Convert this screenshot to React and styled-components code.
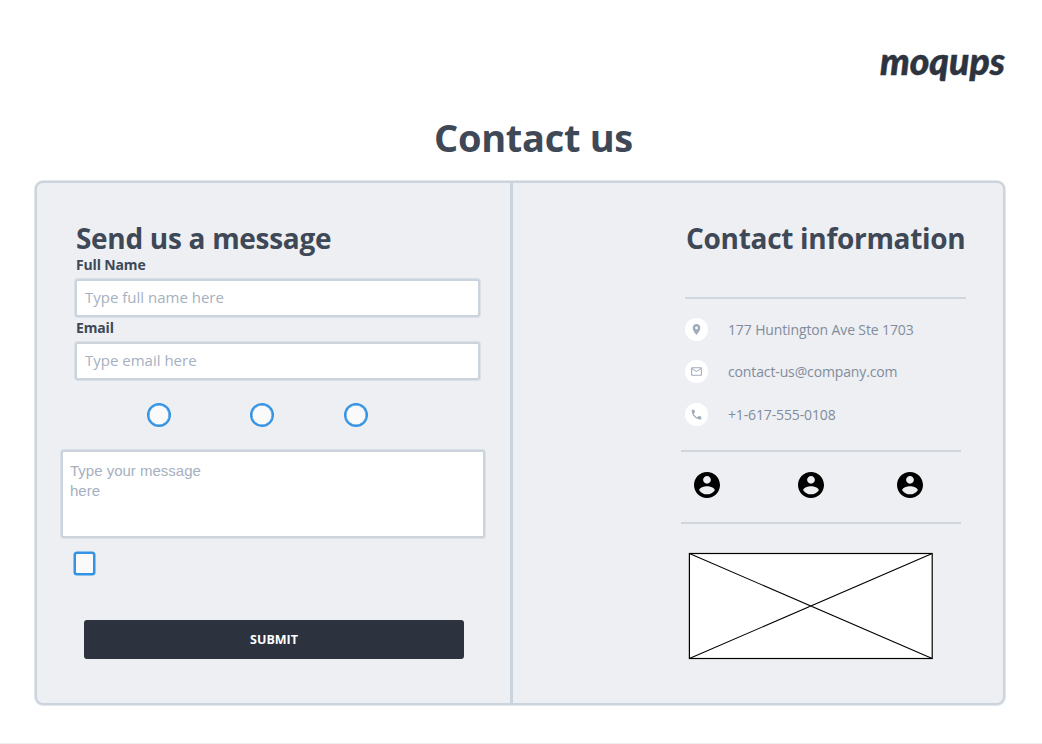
import React from "react";
import styled, { createGlobalStyle } from "styled-components";

const line = "#cbd3dd";
const halo = "rgba(203, 211, 221, 0.55)";
const sans = '"Open Sans", "Noto Sans", sans-serif';

const GlobalStyle = createGlobalStyle`
  *, *::before, *::after { box-sizing: border-box; }
  body { margin: 0; background: #fff; font-family: ${sans}; }
`;

const Page = styled.div`
  display: flex;
  flex-direction: column;
  width: 1042px;
  height: 744px;
  padding: 44px 36px 0 34px;
  border-bottom: 1px solid #efefef;
  overflow: hidden;
`;

const Header = styled.header`
  display: flex;
  justify-content: flex-end;
  height: 46px;
`;

const Wordmark = styled.svg`
  display: block;
  width: 130px;
  height: 46px;
  overflow: visible;
  font: italic 900 38px Lato, sans-serif;
  fill: #2d3440;
  stroke: #2d3440;
  stroke-width: 0.5px;
`;

const PageTitle = styled.h1`
  margin: 21px 0 0 400px;
  height: 69px;
  font-size: 38px;
  line-height: 52px;
  font-weight: 700;
  letter-spacing: -0.3px;
  color: #3e4856;
  white-space: nowrap;
`;

const Panel = styled.main`
  display: flex;
  width: 970px;
  height: 524px;
  margin: 1px;
  border: 2px solid ${line};
  border-radius: 8px;
  box-shadow: 0 0 0 1px ${halo};
  background: #edeff3;
`;

const MessageForm = styled.form`
  display: flex;
  flex-direction: column;
  align-items: flex-start;
  width: 476px;
  padding: 37px 0 0 23px;
  border-right: 3px solid ${line};
`;

const SectionTitle = styled.h2`
  margin: 0;
  height: 37px;
  font-size: 28px;
  line-height: 36px;
  font-weight: 700;
  letter-spacing: -0.3px;
  color: #3e4856;
  white-space: nowrap;
`;

const FormTitle = styled(SectionTitle)`
  margin-left: 16px;
`;

const Field = styled.label`
  display: flex;
  flex-direction: column;
  margin: 0 0 0 14px;
`;

const FieldName = styled.span`
  height: 21px;
  padding-left: 2px;
  font-size: 14px;
  line-height: 16px;
  font-weight: 700;
  letter-spacing: -0.15px;
  color: #3e4856;
`;

const TextInput = styled.input`
  width: 405px;
  height: 38px;
  margin: 1px 1px 3px;
  padding: 0 8px 2px;
  border: 2px solid ${line};
  border-radius: 3px;
  box-shadow: 0 0 0 1px ${halo};
  background: #fff;
  font: 15px ${sans};
  &::placeholder { color: #a5b0c0; opacity: 1; }
`;

const RadioRow = styled.div`
  display: flex;
  height: 24px;
  margin: 20px 0 22px 87px;
`;

const Radio = styled.input`
  appearance: none;
  width: 24px;
  height: 24px;
  margin: 0 ${(p) => p.$gap || 0}px 0 0;
  border: 2px solid #3593e3;
  border-radius: 50%;
  box-shadow: inset 0 0 0 0.5px #3593e3;
  background: #fafafa;
`;

const MessageBox = styled.textarea`
  width: 424px;
  height: 88px;
  margin: 1px;
  padding: 9px 270px 0 7px;
  border: 2px solid ${line};
  border-radius: 3px;
  box-shadow: 0 0 0 1px ${halo};
  background: #fff;
  font: 15px/20px "Liberation Sans", Arial, sans-serif;
  resize: none;
  overflow: hidden;
  &::placeholder { color: #a5b0c0; opacity: 1; }
`;

const Checkbox = styled.input`
  appearance: none;
  width: 21px;
  height: 23px;
  margin: 13px 0 1px 14px;
  border: 2px solid #3593e3;
  border-radius: 3px;
  box-shadow: 0 0 0 0.5px #3593e3;
  background: #fafafa;
`;

const Submit = styled.button`
  width: 380px;
  height: 39px;
  margin: 44px 0 0 24px;
  padding: 0;
  border: 0;
  border-radius: 3px;
  background: #2c333f;
  color: #fff;
  font: 700 12.5px ${sans};
`;

const Info = styled.section`
  display: flex;
  flex-direction: column;
  align-items: flex-start;
  padding: 37px 0 0 168px;
`;

const InfoTitle = styled(SectionTitle)`
  margin: 0 0 40px 5px;
`;

const Rule = styled.hr`
  width: ${(p) => (p.$indent ? 281 : 280)}px;
  height: 2px;
  margin: 0 0 0 ${(p) => p.$indent || 0}px;
  border: 0;
  background: #d0d6de;
`;

const Contacts = styled.ul`
  display: flex;
  flex-direction: column;
  gap: 19.4px;
  margin: 19px 0 24.2px 4px;
  padding: 0;
  list-style: none;
`;

const Contact = styled.li`
  display: flex;
  align-items: center;
  gap: 20px;
  height: 23px;
  font-size: 14px;
  letter-spacing: -0.13px;
  color: #818c9c;
  white-space: nowrap;
`;

const IconDisc = styled.span`
  display: flex;
  align-items: center;
  justify-content: center;
  width: 23px;
  height: 23px;
  border-radius: 50%;
  background: #fff;
`;

const Glyph = styled.svg`
  display: block;
  width: ${(p) => p.$size}px;
  height: ${(p) => p.$size}px;
  fill: ${(p) => p.$color || "#a0abbb"};
`;

const People = styled.div`
  display: flex;
  height: 26px;
  margin: 20px 0 24px 13px;
`;

const Person = styled.span`
  display: block;
  width: ${(p) => p.$width}px;
`;

const Placeholder = styled.svg`
  display: block;
  width: 246px;
  height: 108px;
  margin: 28px 0 0 7px;
`;

const icons = {
  pin: "M12 2C8.13 2 5 5.13 5 9c0 5.25 7 13 7 13s7-7.75 7-13c0-3.87-3.13-7-7-7zm0 9.5a2.5 2.5 0 0 1 0-5 2.5 2.5 0 0 1 0 5z",
  mail: "M20 4H4c-1.1 0-2 .9-2 2v12c0 1.1.9 2 2 2h16c1.1 0 2-.9 2-2V6c0-1.1-.9-2-2-2zm0 14H4V8l8 5 8-5v10zm-8-7L4 6h16l-8 5z",
  phone: "M6.62 10.79c1.44 2.83 3.76 5.14 6.59 6.59l2.2-2.2c.27-.27.67-.36 1.02-.24 1.12.37 2.33.57 3.57.57.55 0 1 .45 1 1V20c0 .55-.45 1-1 1-9.39 0-17-7.61-17-17 0-.55.45-1 1-1h3.5c.55 0 1 .45 1 1 0 1.25.2 2.45.57 3.57.11.35.03.74-.25 1.02l-2.2 2.2z",
  person: "M12 2C6.48 2 2 6.48 2 12s4.48 10 10 10 10-4.48 10-10S17.52 2 12 2zm0 3c1.66 0 3 1.34 3 3s-1.34 3-3 3-3-1.34-3-3 1.34-3 3-3zm0 14.2c-2.5 0-4.71-1.28-6-3.22.03-1.99 4-3.08 6-3.08 1.99 0 5.97 1.09 6 3.08-1.29 1.94-3.5 3.22-6 3.22z",
};

const contacts = [
  { icon: "pin", text: "177 Huntington Ave Ste 1703" },
  { icon: "mail", text: "contact-us@company.com" },
  { icon: "phone", text: "+1-617-555-0108" },
];

export default function App() {
  return (
    <>
      <GlobalStyle />
      <Page>
        <Header>
          <Wordmark viewBox="0 0 130 46" role="img" aria-label="moqups">
            <text x="4" y="31" textLength="125" lengthAdjust="spacingAndGlyphs">moqups</text>
          </Wordmark>
        </Header>
        <PageTitle>Contact us</PageTitle>
        <Panel>
          <MessageForm>
            <FormTitle>Send us a message</FormTitle>
            <Field>
              <FieldName>Full Name</FieldName>
              <TextInput placeholder="Type full name here" />
            </Field>
            <Field>
              <FieldName>Email</FieldName>
              <TextInput placeholder="Type email here" />
            </Field>
            <RadioRow>
              <Radio type="radio" name="choice" $gap={79} />
              <Radio type="radio" name="choice" $gap={70} />
              <Radio type="radio" name="choice" />
            </RadioRow>
            <MessageBox placeholder="Type your message here" />
            <Checkbox type="checkbox" />
            <Submit type="button">SUBMIT</Submit>
          </MessageForm>
          <Info>
            <InfoTitle>Contact information</InfoTitle>
            <Rule $indent={4} />
            <Contacts>
              {contacts.map((c) => (
                <Contact key={c.icon}>
                  <IconDisc>
                    <Glyph $size={13} viewBox="0 0 24 24"><path d={icons[c.icon]} /></Glyph>
                  </IconDisc>
                  {c.text}
                </Contact>
              ))}
            </Contacts>
            <Rule />
            <People>
              {[104, 99, 26].map((w) => (
                <Person key={w} $width={w}>
                  <Glyph $size={26} $color="#000" viewBox="2 2 20 20"><path d={icons.person} /></Glyph>
                </Person>
              ))}
            </People>
            <Rule />
            <Placeholder viewBox="0 0 246 108">
              <rect x="1.4" y="1.5" width="242.8" height="105" fill="#fff" stroke="#000" strokeWidth="1.2" />
              <path d="M1.4 1.5L244.2 106.5M244.2 1.5L1.4 106.5" stroke="#000" strokeWidth="1.1" />
            </Placeholder>
          </Info>
        </Panel>
      </Page>
    </>
  );
}
